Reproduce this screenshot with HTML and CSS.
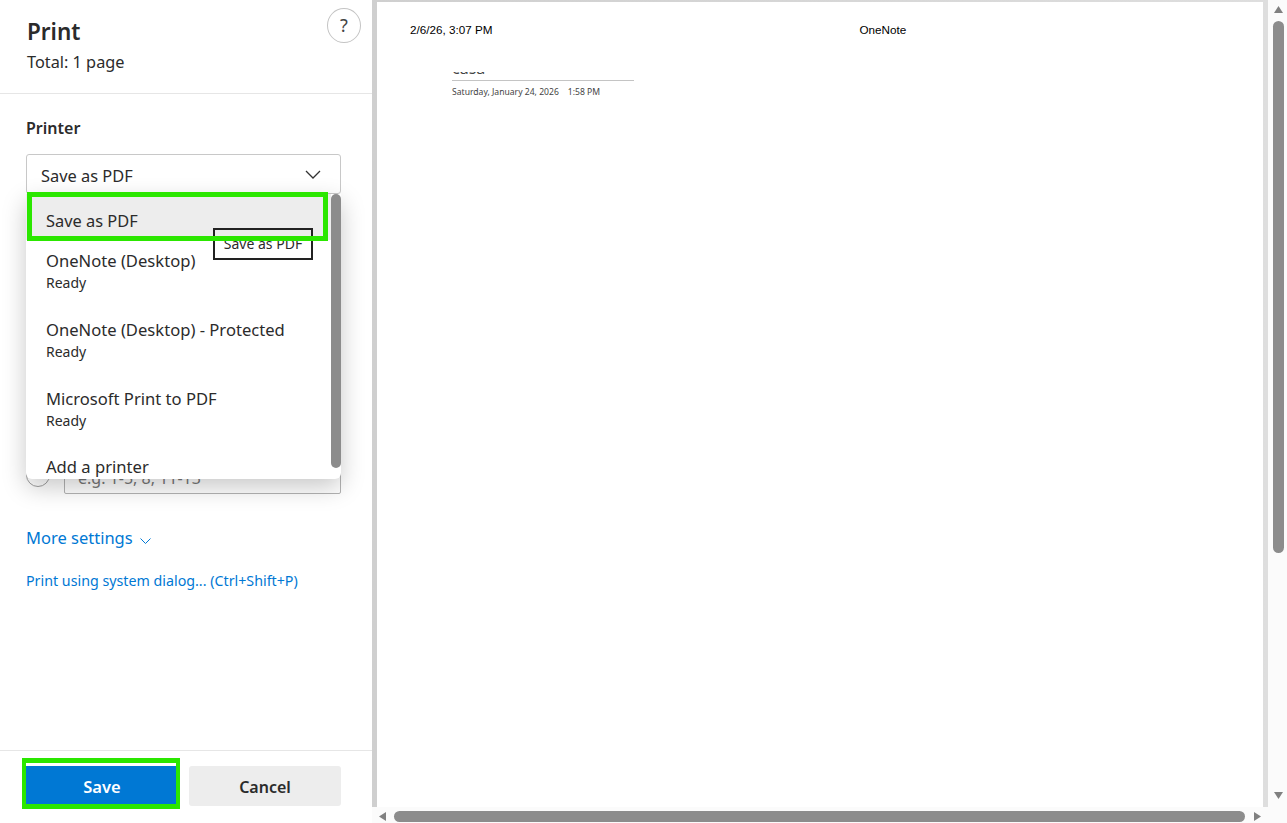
FILE: index.html
```html
<!DOCTYPE html>
<html lang="en">
<head>
<meta charset="utf-8">
<title>Print</title>
<link rel="stylesheet" href="styles.css">
</head>
<body>
<div class="app">
  <aside class="sidebar">
    <header class="head">
      <h1 class="title">Print</h1>
      <p class="total">Total: 1 page</p>
      <button class="help">?</button>
    </header>
    <section class="settings">
      <div class="label">Printer</div>
      <div class="select">
        <span>Save as PDF</span>
        <svg class="chev" width="16" height="9" viewBox="0 0 16 9"><path d="M1 1l7 7 7-7" fill="none" stroke="#333" stroke-width="1.3"/></svg>
      </div>
      <div class="pages-row">
        <span class="radio"></span>
        <div class="pages-input">e.g. 1-5, 8, 11-13</div>
      </div>
      <a class="more">More settings<svg class="chev-small" width="11" height="6" viewBox="0 0 11 6"><path d="M.5.5l5 5 5-5" fill="none" stroke="#0078d4"/></svg></a>
      <a class="system">Print using system dialog... (Ctrl+Shift+P)</a>
      <div class="menu">
        <div class="item first">Save as PDF</div>
        <div class="item"><div>OneNote (Desktop)</div><div class="status">Ready</div></div>
        <div class="item"><div>OneNote (Desktop) - Protected</div><div class="status">Ready</div></div>
        <div class="item"><div>Microsoft Print to PDF</div><div class="status">Ready</div></div>
        <div class="item last">Add a printer</div>
        <div class="menu-thumb"></div>
      </div>
      <div class="tooltip">Save as PDF</div>
    </section>
    <footer class="foot">
      <button class="btn primary">Save</button>
      <button class="btn">Cancel</button>
    </footer>
  </aside>
  <main class="viewer">
    <div class="viewer-main">
      <div class="sheet-frame">
        <div class="sheet">
          <div class="print-head">
            <span>2/6/26, 3:07 PM</span>
            <span>OneNote</span>
          </div>
          <div class="note">
            <div class="note-title"><span>casa</span></div>
            <div class="note-date">Saturday, January 24, 2026 &nbsp;&nbsp; 1:58 PM</div>
          </div>
        </div>
      </div>
      <div class="vscroll">
        <svg class="arrow-up" width="9" height="7" viewBox="0 0 9 7"><path d="M4.5 0L9 7H0z" fill="#808080"/></svg>
        <div class="vthumb"></div>
        <svg class="arrow-down" width="9" height="7" viewBox="0 0 9 7"><path d="M0 0h9L4.500 7z" fill="#808080"/></svg>
      </div>
    </div>
    <div class="hscroll">
      <svg width="7" height="9" viewBox="0 0 7 9"><path d="M7 0v9L0 4.500z" fill="#808080"/></svg>
      <div class="hthumb"></div>
      <svg width="7" height="9" viewBox="0 0 7 9"><path d="M0 0l7 4.500L0 9z" fill="#808080"/></svg>
    </div>
  </main>
  <div class="mark mark-item"></div>
  <div class="mark mark-save"></div>
</div>
</body>
</html>
```

FILE: styles.css
```css
* { box-sizing: border-box; }
html, body { margin: 0; height: 100%; }
body {
  font-family: "Noto Sans", "Open Sans", sans-serif;
  color: #2b2b2b;
  background: #fff;
  overflow: hidden;
}
.app { position: relative; display: flex; width: 1287px; height: 823px; }

.sidebar { width: 372px; flex: none; display: flex; flex-direction: column; }
.head { position: relative; padding: 16px 0 20px 27px; border-bottom: 1px solid #e6e6e6; }
.title { margin: 0; font-size: 22.5px; line-height: 32px; font-weight: 600; }
.total { margin: 3px 0 0; font-size: 16.3px; line-height: 22px; }
.help {
  position: absolute; left: 327px; top: 8px; width: 34px; height: 35px;
  border: 1px solid #c4c4c4; border-radius: 50%; background: #fff;
  font: 18px/1 "Noto Sans", sans-serif; color: #444; padding: 0 0 2px;
}

.settings { position: relative; padding: 23px 31px 0 26px; }
.label { font-size: 16px; line-height: 22px; font-weight: 600; }
.select {
  margin-top: 15px; height: 40px; padding: 2px 19px 0 14px;
  display: flex; align-items: center; justify-content: space-between;
  border: 1px solid #c8c8c8; border-radius: 3px; font-size: 16.4px;
}
.chev { margin-top: -1px; }
.pages-row { margin-top: 266px; height: 34px; display: flex; align-items: flex-end; gap: 14px; }
.radio { width: 24px; height: 24px; margin: 0 0 7px; border: 1px solid #a0a0a0; border-radius: 50%; flex: none; }
.pages-input {
  flex: 1; height: 34px; padding: 0 13px; font-size: 16px; line-height: 34px;
  border: 1px solid #b4b4b4; border-radius: 2px; color: #777; overflow: hidden;
}
.more { display: block; margin-top: 32px; font-size: 16.5px; line-height: 24px; color: #0078d4; }
.chev-small { margin-left: 7px; }
.system { display: block; margin-top: 21px; font-size: 14.25px; line-height: 20px; color: #0078d4; }

.menu {
  position: absolute; left: 26px; top: 100px; width: 315px; height: 285px;
  background: #fff; border-radius: 0 0 6px 6px; overflow: hidden;
  box-shadow: 0 8px 24px rgba(0, 0, 0, .22);
  font-size: 16.6px;
}
.item { height: 69px; padding: 10px 20px 0; line-height: 22px; width: 305px; white-space: nowrap; }
.item.first { height: 46px; padding-top: 16px; background: #ededed; font-size: 16.4px; }
.item.last { padding-top: 9px; }
.status { font-size: 14px; line-height: 22px; }
.menu-thumb {
  position: absolute; right: 0; top: 0; width: 10px; height: 274px;
  background: #8c8c8c; border-radius: 5px;
}
.tooltip {
  position: absolute; left: 213px; top: 134px; width: 100px; height: 32px;
  border: 2px solid #222; font-size: 14px; line-height: 28px; text-align: center;
}

.foot {
  margin-top: auto; display: flex; gap: 13px; padding: 15px 31px 17px 26px;
  border-top: 1px solid #e6e6e6;
}
.btn {
  width: 152px; height: 40px; border: 0; border-radius: 3px; background: #ededed;
  font: 600 16px/42px "Noto Sans", sans-serif; color: #2b2b2b; padding: 0;
}
.btn.primary { width: 150px; background: #0078d4; color: #fff; border-radius: 0; font-size: 16.5px; padding-left: 2px; }

.viewer { flex: 1; display: flex; flex-direction: column; background: #fbfbfb; }
.viewer-main { flex: 1; display: flex; min-height: 0; }
.sheet-frame {
  flex: 1; padding: 2px 5px 0 5px;
  background: linear-gradient(90deg, #cfcfcf, #dedede);
}
.sheet { height: 100%; background: #fff; font-family: "Liberation Sans", Arial, sans-serif; color: #000; }
.print-head { display: flex; gap: 367px; padding: 21px 0 0 33px; font-size: 11.7px; line-height: 14px; }
.note { width: 182px; margin: 35px 0 0 75px; }
.note-title {
  height: 9px; overflow: hidden; position: relative;
  border-bottom: 1px solid #c4c4c4; font: 16px/20px "Noto Sans", sans-serif; color: #444;
}
.note-title span { position: absolute; left: 0; top: -14px; }
.note-date { margin-top: 6px; font: 8.6px/11px "Noto Sans", sans-serif; color: #444; white-space: nowrap; }

.vscroll { width: 19px; flex: none; position: relative; padding: 6px 0 8px 5px; display: flex; flex-direction: column; align-items: flex-start; }
.arrow-up { margin-left: 1px; }
.vthumb { width: 11px; height: 532px; margin-top: 8px; border-radius: 6px; background: #8c8c8c; }
.arrow-down { margin: auto 0 0 1px; }
.hscroll { height: 16px; flex: none; display: flex; align-items: center; padding: 3px 26px 0 7px; }
.hthumb { width: 851px; height: 11px; margin: 0 9px 0 8px; border-radius: 6px; background: #8c8c8c; }

.mark { position: absolute; border: 5px solid #2be700; pointer-events: none; }
.mark-item { left: 27px; top: 192px; width: 301px; height: 49px; }
.mark-save { left: 22px; top: 758px; width: 158px; height: 51px; border-width: 5px 4px; }
```
